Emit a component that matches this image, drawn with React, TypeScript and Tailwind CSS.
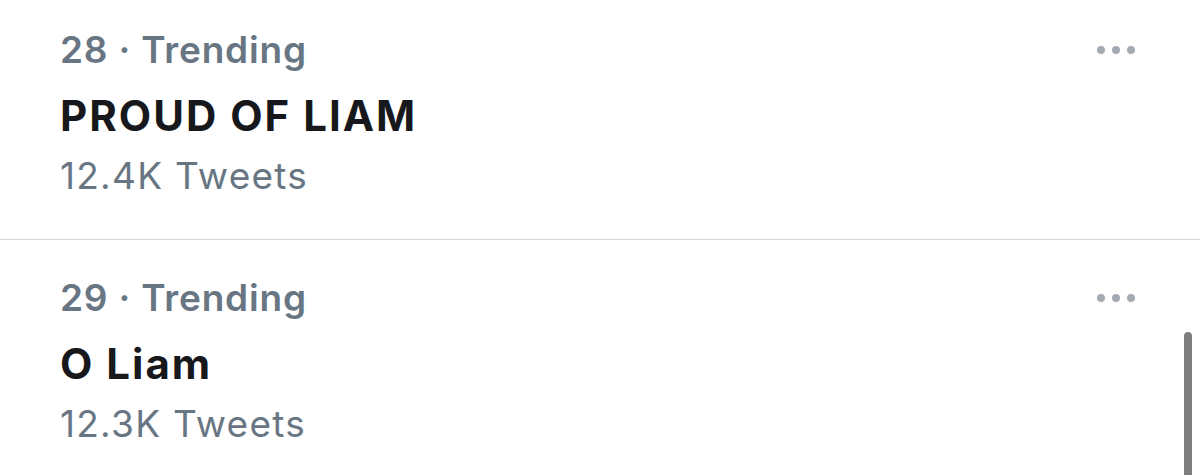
const trends = [
  { rank: 28, title: 'PROUD OF LIAM', count: '12.4K' },
  { rank: 29, title: 'O Liam', count: '12.3K' },
];

function MoreDots() {
  return (
    <div className="flex items-center gap-[7px] pr-[65px]">
      <span className="h-2 w-2 rounded-full bg-[#a3aab2]" />
      <span className="h-2 w-2 rounded-full bg-[#a3aab2]" />
      <span className="h-2 w-2 rounded-full bg-[#a3aab2]" />
    </div>
  );
}

export default function App() {
  return (
    <div
      className="relative h-[475px] w-[1200px] overflow-hidden bg-white"
      style={{ fontFamily: 'Inter, "Liberation Sans", sans-serif' }}
    >
      {trends.map((t, i) => (
        <div key={t.rank}>
          {i > 0 && <div className="h-px bg-[#d6d5dc]" />}
          <div className={`pl-[60px] ${i === 0 ? 'pt-[27px] pb-[40px]' : 'pt-[35px]'}`}>
            <div className="flex items-center justify-between">
              <div className="text-[37px] leading-[46px] font-semibold tracking-[0.8px] text-[#687684]">
                {t.rank} · Trending
              </div>
              <MoreDots />
            </div>
            <div className="mt-[17px] text-[42px] leading-[52px] font-bold tracking-[2px] text-[#16181c]">
              {t.title}
            </div>
            <div className="mt-[11px] text-[37px] leading-[46px] tracking-[1.25px] text-[#687684]">
              {t.count} Tweets
            </div>
          </div>
        </div>
      ))}
      <div className="absolute right-[8px] top-[332px] h-[160px] w-[8px] rounded-full bg-[#7f7f7f]" />
    </div>
  );
}
